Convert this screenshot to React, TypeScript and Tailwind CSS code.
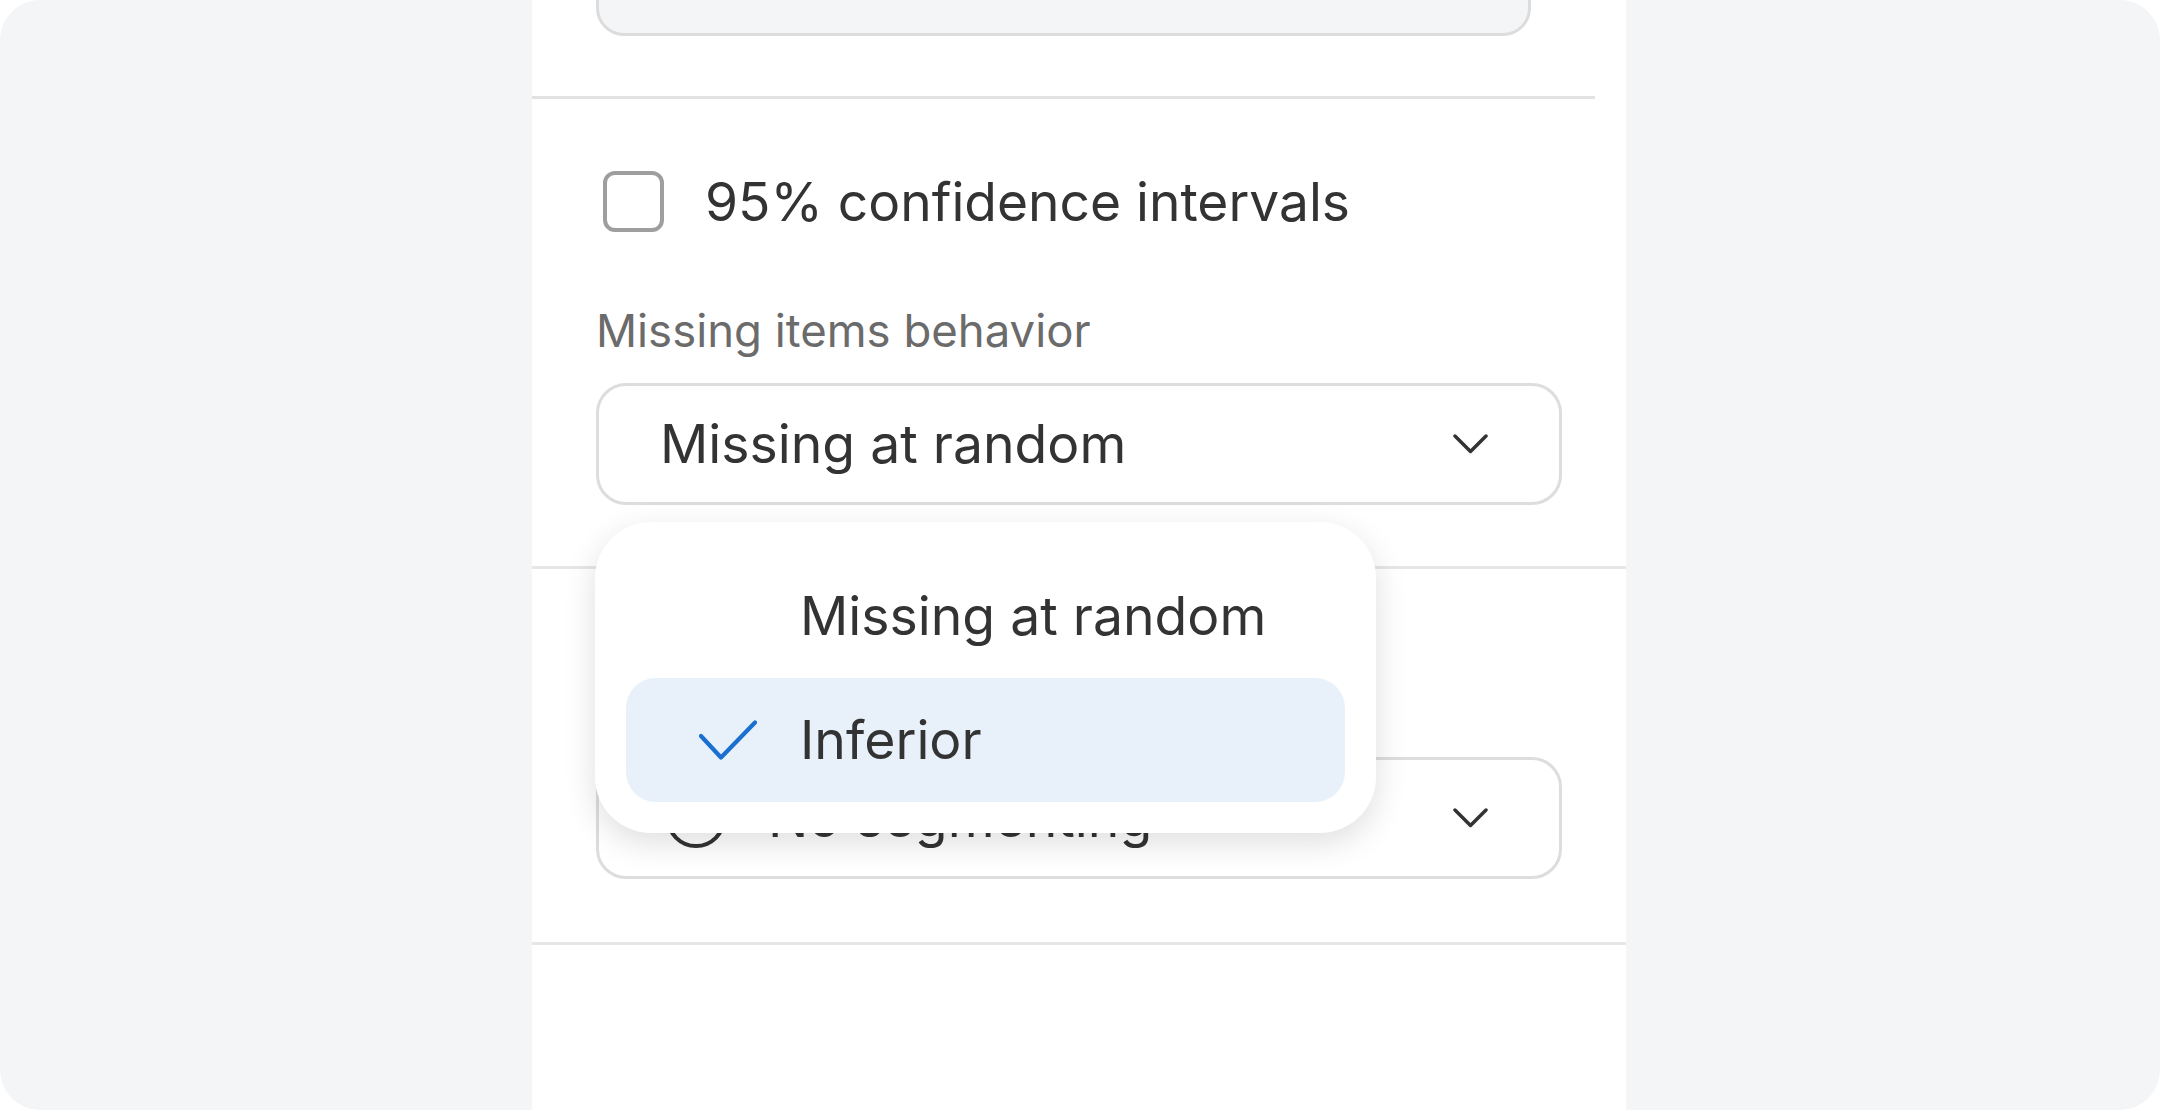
import React from "react";

function Chevron() {
  return (
    <svg width="35" height="20" viewBox="0 0 35 20" fill="none" className="shrink-0">
      <path d="M2 2 L17.5 17.5 L33 2" stroke="#333333" strokeWidth="3.5" strokeLinecap="round" strokeLinejoin="round" />
    </svg>
  );
}

function Check() {
  return (
    <svg width="58" height="40" viewBox="0 0 58 40" fill="none" className="shrink-0">
      <path d="M2 16 L22 37.5 L56 2.5" stroke="#1a6fd0" strokeWidth="4.2" strokeLinecap="round" strokeLinejoin="round" />
    </svg>
  );
}

export default function App() {
  return (
    <div className="w-[2160px] h-[1110px] bg-white [font-family:Inter,'Liberation_Sans',sans-serif] text-[#333333]">
      <div className="h-full rounded-[40px] bg-[#f4f5f7] flex overflow-hidden">
        <div className="w-[532px] shrink-0" />
        <div className="w-[1094px] shrink-0 h-full bg-white flex flex-col">
          {/* Section 1 (scrolled) */}
          <div className="pl-[64px]">
            <div className="-mt-[84px] h-[120px] w-[935px] rounded-[28px] border-[3px] border-[#dcdcdc] bg-[#f4f5f7]" />
          </div>
          <div className="mt-[60px] h-[3px] w-[1063px] bg-[#e2e2e2]" />

          {/* Section 2 */}
          <div className="pl-[64px] flex flex-col items-start">
            <div className="mt-[72px] h-[61px] flex items-center">
              <div className="ml-[7px] w-[61px] h-[61px] rounded-[12px] border-[4px] border-[#9e9e9e] bg-white" />
              <span className="ml-[41px] text-[53.3px] leading-[63px] whitespace-nowrap">95% confidence intervals</span>
            </div>
            <div className="mt-[73px] text-[45.5px] leading-[52px] text-[#6b6b6b] whitespace-nowrap">Missing items behavior</div>
            <div className="relative mt-[26px]">
              <div className="w-[966px] h-[122px] rounded-[30px] border-[3px] border-[#dddddd] bg-white flex items-center justify-between pl-[61px] pr-[71px]">
                <span className="text-[53.5px] leading-[64px] whitespace-nowrap">Missing at random</span>
                <Chevron />
              </div>
              {/* Dropdown menu */}
              <div className="absolute z-10 top-[139px] -left-[1px] w-[781px] h-[311px] rounded-[56px] bg-white shadow-[0_10px_32px_rgba(0,0,0,0.13)] pt-[32px] px-[31px] pb-[31px] flex flex-col">
                <div className="h-[124px] rounded-[30px] flex items-center pl-[174px]">
                  <span className="text-[53.5px] leading-[64px] whitespace-nowrap">Missing at random</span>
                </div>
                <div className="h-[124px] rounded-[30px] bg-[#e8f1fa] flex items-center pl-[73px]">
                  <Check />
                  <span className="ml-[43px] text-[53.5px] leading-[64px] whitespace-nowrap">Inferior</span>
                </div>
              </div>
            </div>
          </div>
          <div className="mt-[61px] h-[3px] w-full bg-[#e6e6e6]" />

          {/* Section 3 */}
          <div className="pl-[64px] flex flex-col items-start">
            <div className="mt-[188px] w-[966px] h-[122px] rounded-[30px] border-[3px] border-[#dddddd] bg-white flex items-center justify-between pl-[67px] pr-[71px]">
              <div className="flex items-center">
                <div className="w-[60px] h-[60px] rounded-full border-[4px] border-[#333333]" />
                <span className="ml-[42px] text-[53.5px] leading-[64px] whitespace-nowrap">No segmenting</span>
              </div>
              <Chevron />
            </div>
          </div>
          <div className="mt-[63px] h-[3px] w-full bg-[#e6e6e6]" />
        </div>
      </div>
    </div>
  );
}
